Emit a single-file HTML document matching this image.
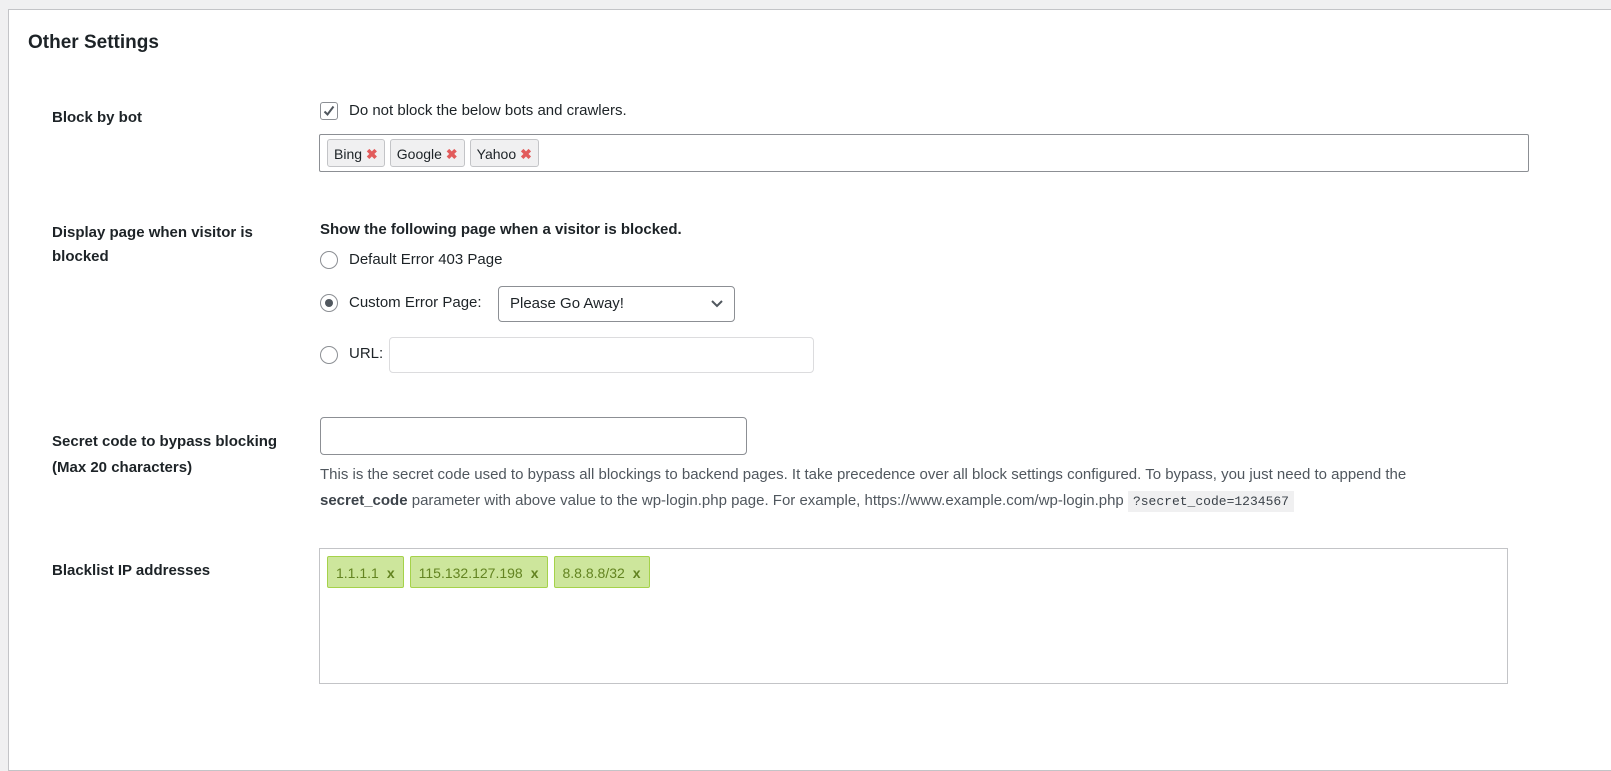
<!DOCTYPE html>
<html><head><style>
body{margin:0;width:1611px;height:709px;background:#f0f0f1;font-family:"Liberation Sans",sans-serif;color:#1d2327;overflow:hidden;position:relative}
.panel{position:absolute;left:8px;top:9px;width:1700px;height:760px;background:#fff;border:1px solid #c3c4c7}
.a{position:absolute;white-space:nowrap}
.t{font-size:15px}
.lbl{font-size:15px;font-weight:bold;line-height:24px}
.radio{position:absolute;width:16px;height:16px;border:1px solid #8c8f94;border-radius:50%;background:#fff}
.tag{display:inline-block;border:1px solid #c3c4c7;border-radius:3px;background:#f0f0f1;padding:0 6px;height:28px;line-height:28px;font-size:14px;margin-right:5px;box-sizing:border-box}
.tag b{color:#e25c5c;margin-left:4px}
.ip{display:inline-block;background:#cde69c;border:1px solid #a5d24a;border-radius:2px;color:#638421;font-size:14px;height:32px;line-height:32px;padding:0 8px;margin-right:6px;box-sizing:border-box}
.ip b{margin-left:8px;font-weight:bold}
</style></head><body>
<div class="panel"></div>
<div class="a" style="left:28px;top:32px;font-size:19px;font-weight:bold;color:#1d2327">Other Settings</div>

<div class="a lbl" style="left:52px;top:106px">Block by bot</div>
<div class="a" style="left:320px;top:102px;width:16px;height:16px;border:1px solid #8c8f94;border-radius:3px;background:#fff"><svg width="16" height="16" viewBox="0 0 16 16" style="position:absolute;left:0;top:0"><path d="M3.5 8.5l3 3 6-8" stroke="#50575e" stroke-width="2" fill="none"/></svg></div>
<div class="a t" style="left:349px;top:102px">Do not block the below bots and crawlers.</div>
<div class="a" style="left:319px;top:134px;width:1210px;height:38px;border:1px solid #8c8f94;padding:4px 7px;box-sizing:border-box;border-radius:2px"><span class="tag">Bing<b>✖</b></span><span class="tag">Google<b>✖</b></span><span class="tag">Yahoo<b>✖</b></span></div>

<div class="a lbl" style="left:52px;top:221px;white-space:normal;width:240px">Display page when visitor is blocked</div>
<div class="a t" style="left:320px;top:221px;font-weight:bold">Show the following page when a visitor is blocked.</div>
<div class="radio" style="left:320px;top:251px"></div>
<div class="a t" style="left:349px;top:251px">Default Error 403 Page</div>
<div class="radio" style="left:320px;top:294px"><div style="position:absolute;left:4px;top:4px;width:8px;height:8px;border-radius:50%;background:#50575e"></div></div>
<div class="a t" style="left:349px;top:294px">Custom Error Page:</div>
<div class="a" style="left:498px;top:286px;width:237px;height:36px;border:1px solid #8c8f94;border-radius:4px;box-sizing:border-box;font-size:15px;line-height:34px;padding-left:11px">Please Go Away!
<svg style="position:absolute;right:10px;top:12px" width="14" height="10" viewBox="0 0 14 10"><path d="M2 2l5 5 5-5" stroke="#50575e" stroke-width="2" fill="none"/></svg></div>
<div class="radio" style="left:320px;top:346px"></div>
<div class="a t" style="left:349px;top:345px">URL:</div>
<div class="a" style="left:389px;top:337px;width:425px;height:36px;border:1px solid #dcdcde;border-radius:4px;box-sizing:border-box"></div>

<div class="a lbl" style="left:52px;top:429px;line-height:26px">Secret code to bypass blocking<br>(Max 20 characters)</div>
<div class="a" style="left:320px;top:417px;width:427px;height:38px;border:1px solid #8c8f94;border-radius:4px;box-sizing:border-box"></div>
<div class="a" style="left:320px;top:462px;width:1240px;white-space:nowrap;font-size:15px;line-height:26px;color:#50575e">This is the secret code used to bypass all blockings to backend pages. It take precedence over all block settings configured. To bypass, you just need to append the<br><b style="color:#3c434a">secret_code</b> parameter with above value to the wp-login.php page. For example, https://www.example.com/wp-login.php <code style="font-family:'Liberation Mono',monospace;font-size:13px;background:#f0f0f1;padding:3px 5px;color:#3c434a">?secret_code=1234567</code></div>

<div class="a lbl" style="left:52px;top:559px">Blacklist IP addresses</div>
<div class="a" style="left:319px;top:548px;width:1189px;height:136px;border:1px solid #c3c4c7;box-sizing:border-box;padding:7px 0 0 7px"><span class="ip">1.1.1.1<b>x</b></span><span class="ip">115.132.127.198<b>x</b></span><span class="ip">8.8.8.8/32<b>x</b></span></div>
</body></html>
